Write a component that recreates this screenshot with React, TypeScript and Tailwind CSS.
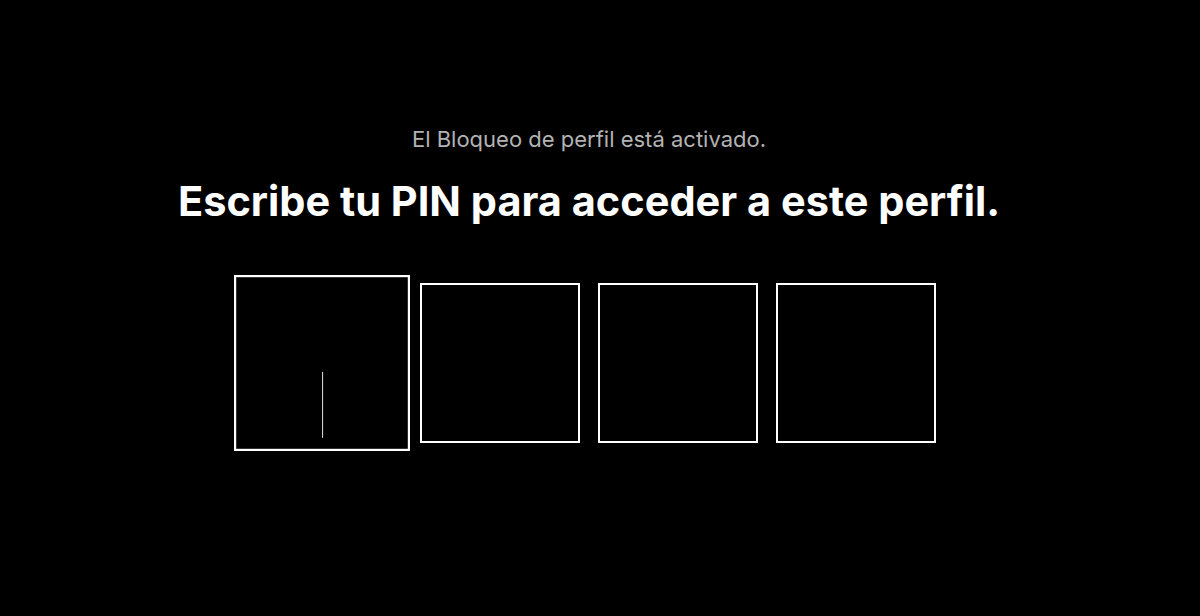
export default function App() {
  const digits = [0, 1, 2, 3]

  return (
    <main className="flex h-[616px] w-full flex-col items-center bg-black pr-[22px] font-['Inter',sans-serif]">
      <p className="mt-[125px] text-[22px] leading-[28px] text-[#b3b3b3]">
        El Bloqueo de perfil está activado.
      </p>
      <h1 className="mt-[22px] text-[41.5px] font-bold leading-[52px] text-white">
        Escribe tu PIN para acceder a este perfil.
      </h1>

      {/* PIN inputs */}
      <div className="mt-[56px] flex gap-[18px]">
        {digits.map((i) => (
          <div
            key={i}
            className={
              i === 0
                ? 'relative h-[160px] w-[160px] scale-110 border-2 border-white'
                : 'relative h-[160px] w-[160px] border-2 border-white'
            }
          >
            {i === 0 && (
              <span className="absolute left-1/2 top-[86px] h-[60px] w-px bg-[#d0d0d0]" />
            )}
          </div>
        ))}
      </div>
    </main>
  )
}
